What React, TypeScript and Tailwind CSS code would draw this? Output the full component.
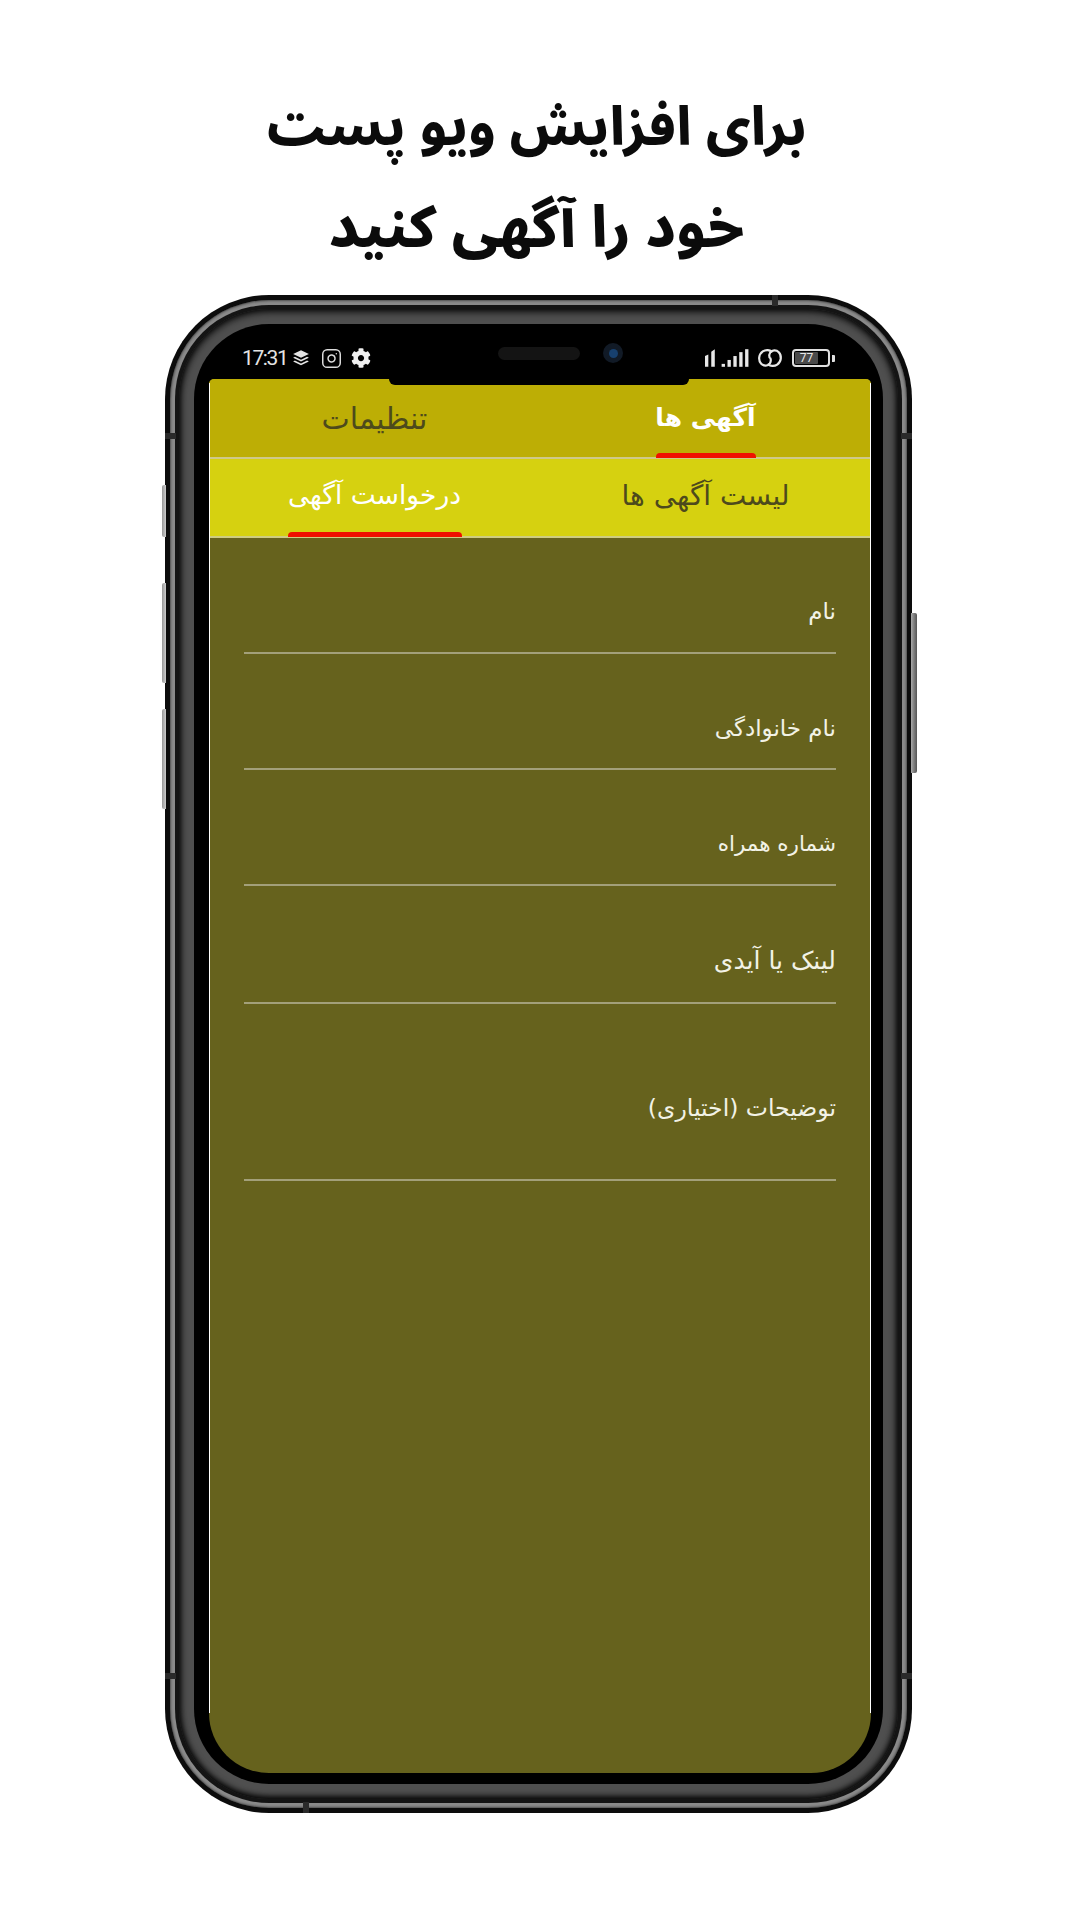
import { Instagram } from 'lucide-react'
import { FaCog } from 'react-icons/fa'

const fields = [
  { label: 'نام', box: 'h-[116px] pt-[58px]', size: 'text-[23px]' },
  { label: 'نام خانوادگی', box: 'h-[116px] pt-[59px]', size: 'text-[23px]' },
  { label: 'شماره همراه', box: 'h-[116px] pt-[59px]', size: 'text-[21.5px]' },
  { label: 'لینک یا آیدی', box: 'h-[118px] pt-[60px]', size: 'text-[25px]' },
  { label: 'توضیحات (اختیاری)', box: 'h-[177px] pt-[89px]', size: 'text-[23.5px]' },
]

function StatusLeft() {
  return (
    <div className="flex items-center">
      <span className="font-['Roboto',sans-serif] text-[21px] leading-none tracking-[-1.4px] text-[#e4e4e4]">17:31</span>
      <svg viewBox="0 0 16 14" className="ml-[5px] w-[18px] h-[16px]" fill="#e4e4e4">
        <path d="M8 0l7 3.4L8 6.8 1 3.4z" />
        <path d="M2.6 5.9L8 8.5l5.4-2.6L15 6.7 8 10.1 1 6.7z" />
        <path d="M2.6 9.2L8 11.8l5.4-2.6 1.6.8L8 13.4 1 10z" />
      </svg>
      <Instagram className="ml-[11px] w-[21px] h-[21px] text-[#dcdcdc]" strokeWidth={1.7} />
      <FaCog className="ml-[9px] w-[20px] h-[20px] text-[#f0f0f0]" />
    </div>
  )
}

function StatusRight() {
  return (
    <div className="flex items-center">
      <svg viewBox="0 0 46 18" className="w-[45px] h-[18px]" fill="#e8e8e8">
        <path d="M0 7l3.4-1.5V18H0zM6.4 2.5L10 0v18H6.4z" />
        <rect x="17" y="15" width="3.4" height="3" />
        <rect x="23" y="11" width="3.4" height="7" />
        <rect x="29" y="7" width="3.4" height="11" />
        <rect x="35" y="3" width="3.4" height="15" />
        <rect x="41" y="0" width="3.4" height="18" />
      </svg>
      <svg viewBox="0 0 26 20" className="ml-[7px] w-[26px] h-[20px]" fill="none" stroke="#e8e8e8" strokeWidth="2.2" strokeLinecap="round">
        <path d="M14.5 3.6C13 2 9 1.2 5.8 3.4 1.6 6.4 1 12.4 4.2 15.8c2.4 2.5 6.8 2.4 8.6-.3 1-1.5 1.2-3.4.7-5" />
        <path d="M11.5 16.4c1.5 1.6 5.5 2.4 8.7.2 4.2-3 4.8-9 1.6-12.4-2.4-2.5-6.8-2.4-8.6.3-1 1.5-1.2 3.4-.7 5" />
      </svg>
      <div className="ml-[9px] w-[38px] h-[18px] rounded-[4px] border-2 border-[#e0e0e0] p-[1px] flex">
        <div className="w-[72%] h-full bg-[#4a4a4a] rounded-[1px] flex items-center justify-center">
          <span className="font-['Roboto',sans-serif] text-[12px] leading-none text-[#e8e8e8]">77</span>
        </div>
      </div>
      <div className="ml-[2px] w-[3px] h-[7px] bg-[#e0e0e0] rounded-r-[1px]" />
    </div>
  )
}

export default function App() {
  return (
    <div dir="ltr" className="w-[1080px] h-[1920px] bg-white overflow-hidden font-['DejaVu_Sans',sans-serif]">
      <div dir="rtl" className="h-[295px] pt-[77px] pr-[7px] flex flex-col items-center font-['Noto_Sans_Arabic','Vazirmatn','DejaVu_Sans',sans-serif] font-extrabold text-[#0b0b0b]">
        <div className="h-[101px] text-[53.5px] leading-[101px]">برای افزایش ویو پست</div>
        <div className="h-[101px] text-[57.5px] leading-[101px]">خود را آگهی کنید</div>
      </div>

      <div className="relative ml-[165px] w-[747px] h-[1518px]">
        {/* side buttons */}
        <div className="absolute left-[-3px] top-[190px] w-[4px] h-[52px] rounded-l-[2px] bg-gradient-to-r from-[#999] to-[#ccc]" />
        <div className="absolute left-[-3px] top-[288px] w-[4px] h-[100px] rounded-l-[2px] bg-gradient-to-r from-[#999] to-[#ccc]" />
        <div className="absolute left-[-3px] top-[414px] w-[4px] h-[100px] rounded-l-[2px] bg-gradient-to-r from-[#999] to-[#ccc]" />
        <div className="absolute right-[-5px] top-[318px] w-[6px] h-[160px] rounded-r-[2px] bg-gradient-to-l from-[#555] to-[#aaa]" />

        <div className="h-full rounded-[104px] bg-[#0c0c0c] p-[5px]">
          <div className="h-full rounded-[99px] bg-[#8a8a8a] shadow-[inset_0_0_3px_#111] p-[5px]">
            <div className="h-full rounded-[94px] bg-[#141414] p-[4px]">
              <div className="h-full rounded-[90px] bg-[#4f4f4f] shadow-[inset_0_-2px_6px_#000,inset_0_2px_8px_#000] p-[15px]">
                <div className="h-full rounded-[75px] bg-black pl-[15px] pr-[12px] pb-[11px] flex flex-col">
                  <div className="relative h-[55px] shrink-0 flex items-center justify-between pl-[33px] pr-[36px] pt-[13px]">
                    <StatusLeft />
                    <div className="absolute left-[289px] top-[23px] w-[82px] h-[13px] rounded-full bg-[#141414]" />
                    <div className="absolute left-[394px] top-[19px] w-[20px] h-[20px] rounded-full bg-[#111a26] flex items-center justify-center">
                      <div className="w-[9px] h-[9px] rounded-full bg-[#17406e]" />
                    </div>
                    <StatusRight />
                  </div>

                  <div dir="rtl" className="relative flex-1 flex flex-col overflow-hidden rounded-t-[5px] rounded-b-[60px] bg-[#66621d]">
                    {/* notch lip and the thin white edges of the screen */}
                    <div className="absolute left-[180px] top-0 w-[300px] h-[6px] rounded-b-[12px] bg-black" />
                    <div className="absolute left-0 top-[4px] w-px h-[1330px] bg-white" />
                    <div className="absolute right-0 top-[4px] w-px h-[1330px] bg-white" />

                    <div className="h-[80px] shrink-0 flex bg-[#bdae05] border-b-2 border-[#cfc98a]">
                      <div className="w-1/2 flex flex-col items-center">
                        <span className="flex-1 flex items-center pt-[4px] text-[25px] font-bold text-white">آگهی ها</span>
                        <div className="w-[100px] h-[5px] -mb-px rounded-t-[4px] bg-[#f01000]" />
                      </div>
                      <div className="w-1/2 flex flex-col items-center">
                        <span className="flex-1 flex items-center text-[30px] text-[#4d4a1c]">تنظیمات</span>
                      </div>
                    </div>

                    <div className="h-[79px] shrink-0 flex bg-[#d6d110] border-b-2 border-[#cfcc80]">
                      <div className="w-1/2 flex flex-col items-center">
                        <span className="flex-1 flex items-center pb-[4px] text-[28px] text-[#4d4a1c]">لیست آگهی ها</span>
                      </div>
                      <div className="w-1/2 flex flex-col items-center">
                        <span className="flex-1 flex items-center pb-[2px] text-[26.5px] text-white">درخواست آگهی</span>
                        <div className="w-[174px] h-[5px] -mb-px rounded-t-[4px] bg-[#f01000]" />
                      </div>
                    </div>

                    <div className="px-[35px] flex flex-col">
                      {fields.map((f) => (
                        <div key={f.label} className={`${f.box} ${f.size} border-b-[2px] border-[#a3a07a] leading-[30px] text-[#f2f2e6]`}>
                          {f.label}
                        </div>
                      ))}
                    </div>
                  </div>
                </div>
              </div>
            </div>
          </div>
        </div>

        {/* antenna bands */}
        <div className="absolute left-[607px] top-0 w-[6px] h-[11px] bg-[#2a2a2a]" />
        <div className="absolute left-0 top-[138px] w-[11px] h-[6px] bg-[#2a2a2a]" />
        <div className="absolute right-0 top-[138px] w-[11px] h-[6px] bg-[#2a2a2a]" />
        <div className="absolute left-0 top-[1378px] w-[11px] h-[6px] bg-[#2a2a2a]" />
        <div className="absolute right-0 top-[1378px] w-[11px] h-[6px] bg-[#2a2a2a]" />
        <div className="absolute left-[138px] bottom-0 w-[6px] h-[11px] bg-[#2a2a2a]" />
      </div>
    </div>
  )
}
